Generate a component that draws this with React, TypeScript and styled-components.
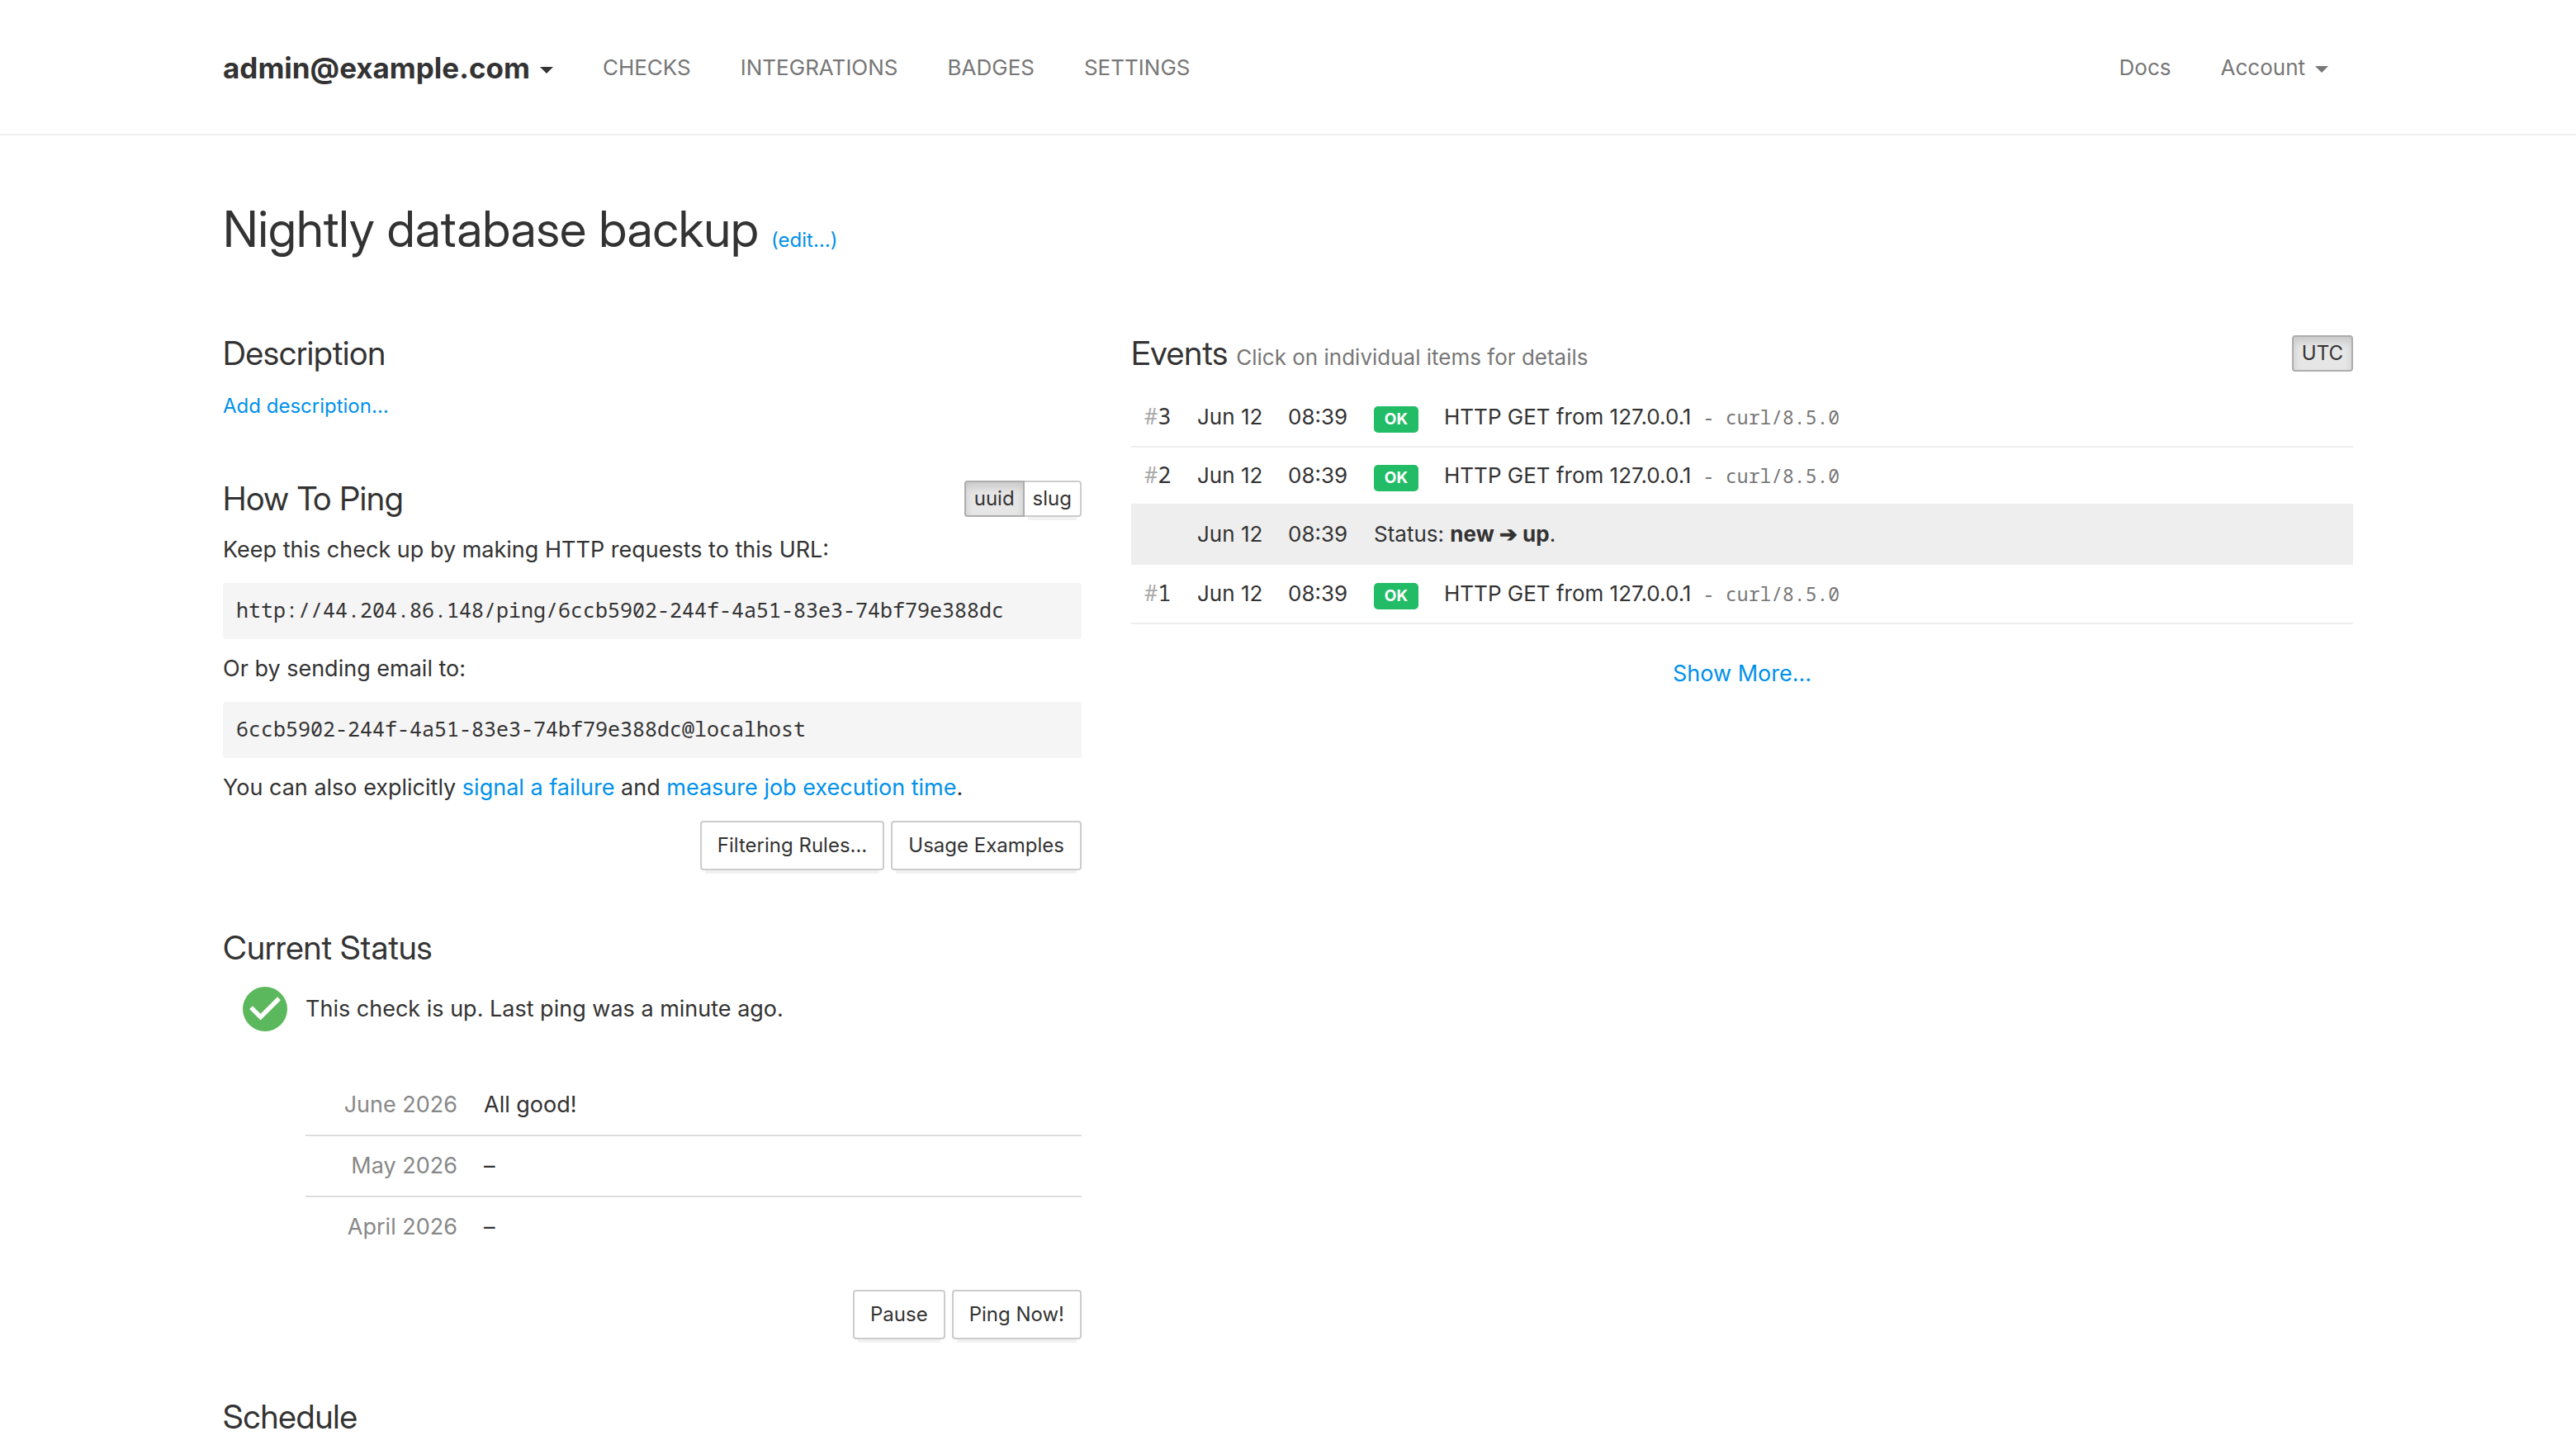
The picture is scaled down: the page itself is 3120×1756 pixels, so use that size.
import * as React from "react";
import styled, { createGlobalStyle } from "styled-components";

const sans = `Inter, "Liberation Sans", sans-serif`;
const display = `"Inter Display", ${sans}`;
const mono = `"Noto Sans Mono", "DejaVu Sans Mono", monospace`;

const GlobalStyle = createGlobalStyle`
  * {
    box-sizing: border-box;
  }

  body {
    margin: 0;
    background: #fff;
    color: #333;
    font-family: ${sans};
    font-size: 27px;
    line-height: 40px;
  }
`;

const Container = styled.div`
  max-width: 2640px;
  margin: 0 auto;
  padding: 0 30px;
`;

const Link = styled.a<{ small?: boolean }>`
  color: #0091ea;
  font-family: ${sans};
  font-size: ${({ small }) => (small ? "24px" : "inherit")};
  line-height: 1;
  text-decoration: none;
`;

const Header = styled.header`
  border-bottom: 2px solid #eee;
`;

const Nav = styled.nav`
  display: flex;
  align-items: center;
  height: 162px;
  padding-top: 2px;
`;

const NavGroup = styled.div`
  display: flex;
  gap: 60px;

  &:last-child {
    margin-left: auto;
    padding-right: 30px;
  }
`;

const NavLink = styled.a`
  color: #777;
  font-size: 26px;
  text-decoration: none;
`;

const Brand = styled.a`
  margin-right: 60px;
  color: #333;
  font-size: 35px;
  font-weight: 700;
  text-decoration: none;
`;

const Caret = styled.span`
  display: inline-block;
  margin-left: 12px;
  vertical-align: middle;
  border-top: 8px solid;
  border-right: 8px solid transparent;
  border-left: 8px solid transparent;
`;

const Title = styled.h1`
  margin: 80px 0 96px;
  font-family: ${display};
  font-size: 60px;
  font-weight: 400;
  line-height: 66px;
`;

const Columns = styled.main`
  display: grid;
  grid-template-columns: 5fr 7fr;
  margin: 0 -30px;
`;

const Column = styled.div`
  min-width: 0;
  padding: 0 30px;
`;

const Section = styled.section`
  margin-bottom: 72px;
`;

const SectionHead = styled.div<{ gap: number }>`
  display: flex;
  justify-content: space-between;
  margin-bottom: ${({ gap }) => gap}px;
`;

const Heading = styled.h2`
  margin: 0;
  font-family: ${display};
  font-size: 40px;
  font-weight: 400;
  line-height: 44px;

  small {
    color: #777;
    font-family: ${sans};
    font-size: 26px;
    line-height: 1;
  }
`;

const AddDescription = styled.div`
  font-size: 24px;
  line-height: 36px;
`;

const Text = styled.p`
  margin: 0 0 20px;
`;

const CodeBox = styled.code`
  display: block;
  margin-bottom: 16px;
  padding: 12px 16px 16px;
  border-radius: 4px;
  background: #f5f5f5;
  font-family: ${mono};
  font-size: 25px;
`;

const Button = styled.button`
  padding: 10px 19px;
  border: 2px solid #ccc;
  border-radius: 4px;
  background: #fff;
  box-shadow: 0 10px 0 -6px #f1f1f1;
  color: #333;
  font-family: ${sans};
  font-size: 24px;
  line-height: 36px;
`;

const ButtonRow = styled.div`
  display: flex;
  justify-content: flex-end;
  gap: 8px;
`;

const Toggle = styled(Button)<{ active?: boolean }>`
  padding: 2px 10px;

  ${({ active }) =>
    active &&
    `
    z-index: 1;
    border-color: #adadad;
    background: #e6e6e6;
    box-shadow: inset 0 6px 10px rgba(0, 0, 0, 0.125);
  `}
`;

const ToggleGroup = styled.div`
  display: flex;

  button:first-child:not(:last-child) {
    border-top-right-radius: 0;
    border-bottom-right-radius: 0;
  }

  button + button {
    margin-left: -2px;
    border-top-left-radius: 0;
    border-bottom-left-radius: 0;
  }
`;

const StatusLine = styled.div`
  display: flex;
  align-items: center;
  gap: 22px;
  padding-left: 24px;
`;

const StatusIcon = styled.svg`
  width: 54px;
  height: 54px;
  fill: #5cb85c;
`;

const Downtimes = styled.div`
  margin: 53px 0 40px 100px;
`;

const DowntimeTable = styled.table`
  width: 100%;
  border-collapse: collapse;

  th {
    width: 200px;
    padding: 16px;
    color: #888;
    font-weight: 400;
    text-align: right;
    white-space: nowrap;
  }

  td {
    padding: 16px;
  }

  tr + tr {
    border-top: 2px solid #ddd;
  }
`;

const EventTable = styled.table`
  width: 100%;
  border-spacing: 0;
  table-layout: fixed;
  font-size: 26px;
`;

const EventRow = styled.tr<{ status?: boolean; short?: boolean }>`
  height: ${({ short }) => (short ? 70 : 72)}px;
  background: ${({ status }) => (status ? "#eee" : "none")};
`;

const Cell = styled.td<{ w?: number }>`
  width: ${({ w }) => (w ? `${w}px` : "auto")};
  padding: 0 0 0 16px;
  border-bottom: 2px solid #eee;
  white-space: nowrap;
`;

const Num = styled.span`
  font-family: ${mono};
  font-size: 27px;
  line-height: 1;

  span {
    color: #aaa;
  }
`;

const Badge = styled.span`
  display: block;
  width: 54px;
  margin-top: 6px;
  border-radius: 5px;
  background: #22bc66;
  color: #fff;
  font-size: 19px;
  font-weight: 700;
  line-height: 32px;
  text-align: center;
`;

const Agent = styled.span`
  margin-left: 14px;
  color: #777;
  font-family: ${mono};
  font-size: 23px;
  line-height: 1;
`;

const ShowMore = styled.div`
  margin-top: 40px;
  text-align: center;
`;

type Event = {
  n?: number;
  date: string;
  time: string;
};

const events: Event[] = [
  { n: 3, date: "Jun 12", time: "08:39" },
  { n: 2, date: "Jun 12", time: "08:39" },
  { date: "Jun 12", time: "08:39" },
  { n: 1, date: "Jun 12", time: "08:39" }
];

const downtimes = [
  ["June 2026", "All good!"],
  ["May 2026", "–"],
  ["April 2026", "–"]
];

const TopNav = () => (
  <Header>
    <Container>
      <Nav>
        <Brand href="#projects">
          admin@example.com
          <Caret />
        </Brand>
        <NavGroup>
          <NavLink href="#checks">CHECKS</NavLink>
          <NavLink href="#integrations">INTEGRATIONS</NavLink>
          <NavLink href="#badges">BADGES</NavLink>
          <NavLink href="#settings">SETTINGS</NavLink>
        </NavGroup>
        <NavGroup>
          <NavLink href="#docs">Docs</NavLink>
          <NavLink href="#account">
            Account
            <Caret />
          </NavLink>
        </NavGroup>
      </Nav>
    </Container>
  </Header>
);

const HowToPing = () => (
  <Section>
    <SectionHead gap={20}>
      <Heading>How To Ping</Heading>
      <ToggleGroup>
        <Toggle active>uuid</Toggle>
        <Toggle>slug</Toggle>
      </ToggleGroup>
    </SectionHead>
    <Text>Keep this check up by making HTTP requests to this URL:</Text>
    <CodeBox>
      http://44.204.86.148/ping/6ccb5902-244f-4a51-83e3-74bf79e388dc
    </CodeBox>
    <Text>Or by sending email to:</Text>
    <CodeBox>6ccb5902-244f-4a51-83e3-74bf79e388dc@localhost</CodeBox>
    <Text>
      You can also explicitly <Link href="#fail">signal a failure</Link> and{" "}
      <Link href="#start">measure job execution time</Link>.
    </Text>
    <ButtonRow>
      <Button>Filtering Rules…</Button>
      <Button>Usage Examples</Button>
    </ButtonRow>
  </Section>
);

const CurrentStatus = () => (
  <Section>
    <SectionHead gap={25}>
      <Heading>Current Status</Heading>
    </SectionHead>
    <StatusLine>
      <StatusIcon viewBox="2 2 20 20">
        <path d="M12 2a10 10 0 1 0 0 20 10 10 0 0 0 0-20zm-2 15-5-5 1.41-1.41L10 14.17l7.59-7.59L19 8z" />
      </StatusIcon>
      <span>This check is up. Last ping was a minute ago.</span>
    </StatusLine>
    <Downtimes>
      <DowntimeTable>
        <tbody>
          {downtimes.map(([month, summary]) => (
            <tr key={month}>
              <th scope="row">{month}</th>
              <td>{summary}</td>
            </tr>
          ))}
        </tbody>
      </DowntimeTable>
    </Downtimes>
    <ButtonRow>
      <Button>Pause</Button>
      <Button>Ping Now!</Button>
    </ButtonRow>
  </Section>
);

const EventLog = () => (
  <EventTable>
    <tbody>
      {events.map((event, i) => (
        <EventRow
          key={i}
          status={!event.n}
          short={!!events[i + 1] && !events[i + 1].n}
        >
          <Cell w={64}>
            {event.n && (
              <Num>
                <span>#</span>
                {event.n}
              </Num>
            )}
          </Cell>
          <Cell w={110}>{event.date}</Cell>
          <Cell w={104}>{event.time}</Cell>
          {event.n ? (
            <>
              <Cell w={85}>
                <Badge>OK</Badge>
              </Cell>
              <Cell>
                HTTP GET from 127.0.0.1
                <Agent>- curl/8.5.0</Agent>
              </Cell>
            </>
          ) : (
            <Cell colSpan={2}>
              Status: <b>new ➔ up</b>.
            </Cell>
          )}
        </EventRow>
      ))}
    </tbody>
  </EventTable>
);

export default function App() {
  return (
    <>
      <GlobalStyle />
      <TopNav />
      <Container>
        <Title>
          Nightly database backup{" "}
          <Link small href="#edit">
            (edit…)
          </Link>
        </Title>
        <Columns>
          <Column>
            <Section>
              <SectionHead gap={24}>
                <Heading>Description</Heading>
              </SectionHead>
              <AddDescription>
                <Link small href="#description">
                  Add description…
                </Link>
              </AddDescription>
            </Section>
            <HowToPing />
            <CurrentStatus />
            <Heading>Schedule</Heading>
          </Column>
          <Column>
            <SectionHead gap={20}>
              <Heading>
                Events <small>Click on individual items for details</small>
              </Heading>
              <Toggle active>UTC</Toggle>
            </SectionHead>
            <EventLog />
            <ShowMore>
              <Link href="#log">Show More…</Link>
            </ShowMore>
          </Column>
        </Columns>
      </Container>
    </>
  );
}
